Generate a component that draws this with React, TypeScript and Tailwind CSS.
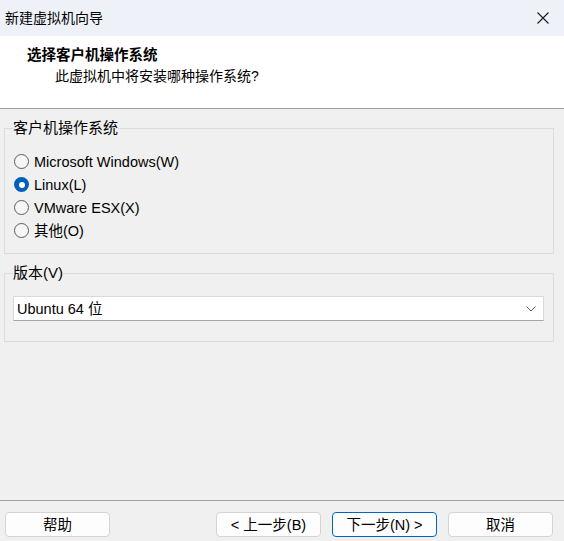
import { useState } from 'react';

const font = { fontFamily: '"Liberation Sans", "Noto Sans CJK SC", sans-serif' };

const osOptions = [
  { id: 'windows', label: 'Microsoft Windows(W)' },
  { id: 'linux', label: 'Linux(L)' },
  { id: 'esx', label: 'VMware ESX(X)' },
  { id: 'other', label: '其他(O)' },
];

function Radio({ checked }: { checked: boolean }) {
  if (checked) {
    return (
      <span className="flex h-[15px] w-[15px] items-center justify-center rounded-full bg-[#005fb8]">
        <span className="h-[6px] w-[6px] rounded-full bg-white" />
      </span>
    );
  }
  return <span className="h-[15px] w-[15px] rounded-full border border-[#5c5c5c] bg-[#f6f6f6]" />;
}

function Button({ children, primary }: { children: React.ReactNode; primary?: boolean }) {
  return (
    <button
      className={
        'flex h-[25px] w-[105px] items-center justify-center rounded-[4px] border bg-[#fdfdfd] text-[14.5px] text-black ' +
        (primary ? 'border-[#0067c0]' : 'border-[#d4d4d4]')
      }
    >
      {children}
    </button>
  );
}

export default function App() {
  const [os, setOs] = useState('linux');

  return (
    <div className="flex h-[541px] w-[564px] flex-col bg-[#f0f0f0] text-[14.5px] leading-[20px] text-black" style={font}>
      {/* title bar */}
      <div className="flex h-[36px] items-center justify-between bg-[#eef2f8] pl-[5px] pr-[15px]">
        <span className="text-[14px]">新建虚拟机向导</span>
        <svg width="12" height="12" viewBox="0 0 12 12" className="text-[#1a1a1a]">
          <path d="M0.5 0.5 L11.5 11.5 M11.5 0.5 L0.5 11.5" stroke="currentColor" strokeWidth="1.1" />
        </svg>
      </div>

      {/* header */}
      <div className="h-[73px] border-b border-[#a0a0a0] bg-white pl-[27px] pt-[9px]">
        <div className="font-bold">选择客户机操作系统</div>
        <div className="mt-[1px] pl-[28px] text-[14px]">此虚拟机中将安装哪种操作系统?</div>
      </div>

      {/* body */}
      <div className="flex flex-1 flex-col px-[4px]">
        <fieldset className="mt-[9px] w-[550px] border border-[#dcdcdc] pb-[11px] pl-[8px] pr-[9px] pt-[12px]">
          <legend className="text-[15px]">客户机操作系统</legend>
          <div className="flex flex-col">
            {osOptions.map((o) => (
              <label
                key={o.id}
                className="flex h-[23px] cursor-default items-center gap-[5px] pl-[1px]"
                onClick={() => setOs(o.id)}
              >
                <Radio checked={os === o.id} />
                <span>{o.label}</span>
              </label>
            ))}
          </div>
        </fieldset>

        <fieldset className="mt-[9px] w-[550px] border border-[#dcdcdc] pb-[20px] pl-[8px] pr-[9px] pt-[13px]">
          <legend className="text-[15px]">版本(V)</legend>
          <div className="flex h-[25px] items-center justify-between border border-[#d9d9d9] border-b-[#a8a8a8] bg-white pl-[3px] pr-[7px]">
            <span>Ubuntu 64 位</span>
            <svg width="10" height="6" viewBox="0 0 10 6">
              <path d="M0.5 0.5 L5 5 L9.5 0.5" fill="none" stroke="#606060" strokeWidth="1" />
            </svg>
          </div>
        </fieldset>
      </div>

      {/* footer */}
      <div className="flex h-[41px] items-start border-t border-[#a0a0a0] pl-[5px] pr-[11px] pt-[11px]">
        <Button>帮助</Button>
        <div className="flex-1" />
        <div className="flex gap-[11px]">
          <Button>&lt; 上一步(B)</Button>
          <Button primary>下一步(N) &gt;</Button>
          <Button>取消</Button>
        </div>
      </div>
    </div>
  );
}
